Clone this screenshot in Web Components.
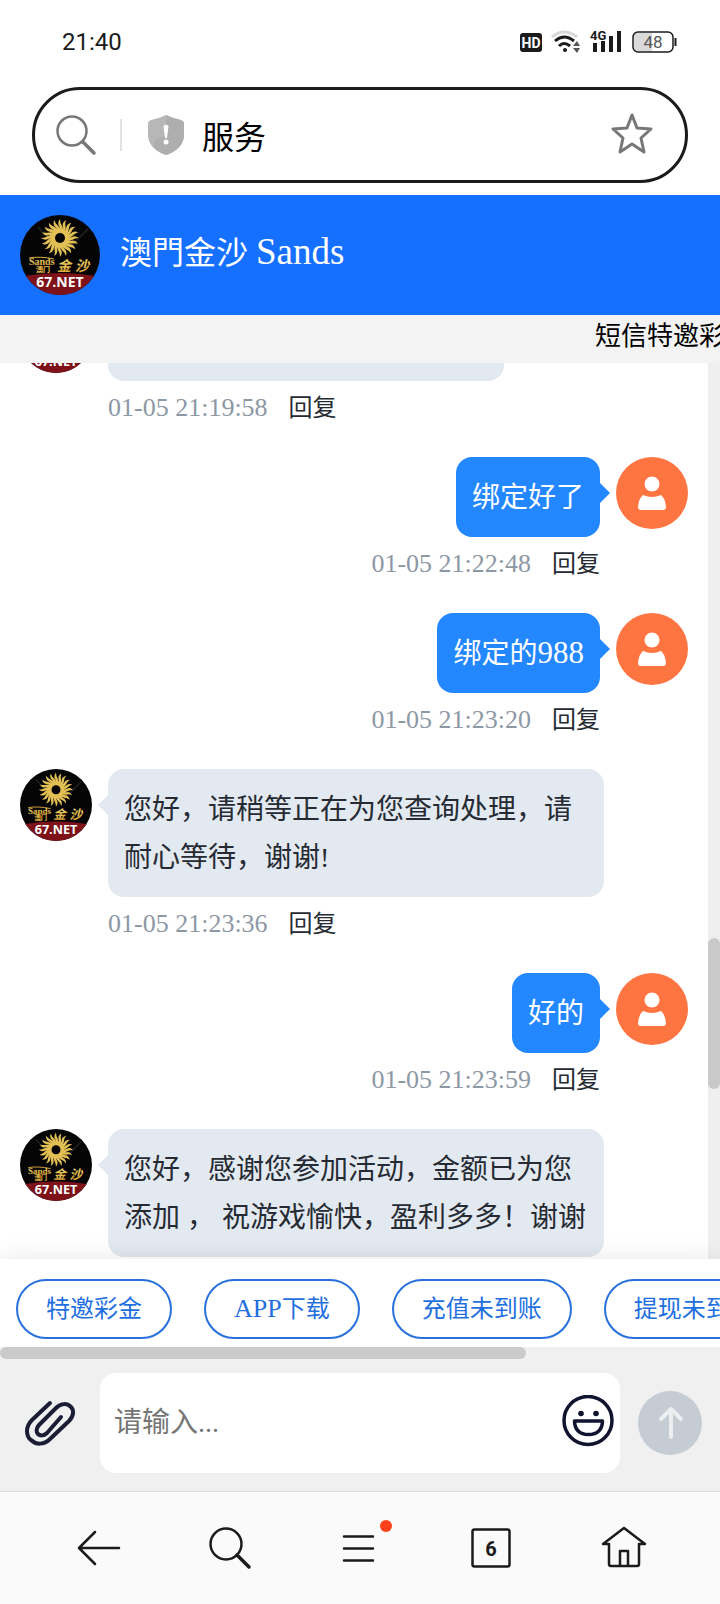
<!DOCTYPE html>
<html lang="zh-CN">
<head>
<meta charset="utf-8">
<meta name="viewport" content="width=device-width, initial-scale=1">
<title>服务</title>
<style>
    body {
        margin: 0;
        height: 100vh;
        display: flex;
        flex-direction: column;
        overflow: hidden;
        background: #fff;
        color: #262b33;
        font-family: "Liberation Serif", "Noto Sans CJK SC", sans-serif;
    }
</style>
</head>
<body>
    <status-bar time="21:40" battery="48"></status-bar>
    <address-bar value="服务"></address-bar>
    <chat-header>澳門金沙 <span>Sands</span></chat-header>
    <notice-bar>短信特邀彩</notice-bar>
    <chat-list>
        <chat-message class="history" time="01-05 21:19:58"></chat-message>
        <chat-message own time="01-05 21:22:48">绑定好了</chat-message>
        <chat-message own time="01-05 21:23:20">绑定的<span>988</span></chat-message>
        <chat-message time="01-05 21:23:36">您好，请稍等正在为您查询处理，请耐心等待，谢谢!</chat-message>
        <chat-message own time="01-05 21:23:59">好的</chat-message>
        <chat-message>您好，感谢您参加活动，金额已为您添加 ， 祝游戏愉快，盈利多多！谢谢</chat-message>
    </chat-list>
    <quick-replies>
        <button>特邀彩金</button>
        <button><quick-word>APP</quick-word>下载</button>
        <button>充值未到账</button>
        <button>提现未到账</button>
    </quick-replies>
    <message-composer placeholder="请输入..."></message-composer>
    <browser-nav tabs="6"></browser-nav>

<script>
class StatusBar extends HTMLElement {

    connectedCallback() {
        this.attachShadow({mode: "open"}).innerHTML = `
            <style>
                :host {
                    display: flex;
                    flex: none;
                    align-items: center;
                    justify-content: space-between;
                    height: 83px;
                    padding: 0 43px 0 62px;
                    font-family: Roboto, sans-serif;
                    font-size: 24px;
                    color: #1b1b1d;
                }
                .icons {
                    display: flex;
                    align-items: center;
                    gap: 9px;
                }
                svg {
                    display: block;
                }
            </style>
            <span>${this.getAttribute("time")}</span>
            <div class="icons">
                <svg width="22" height="22" viewBox="0 0 22 22">
                    <rect x="0" y="2" width="22" height="19" rx="3" fill="#1b1b1d"/>
                    <text x="11" y="17" text-anchor="middle" font-size="14" font-weight="700" fill="#fff">HD</text>
                </svg>
                <svg width="30" height="24" viewBox="0 0 30 24" fill="none" stroke-width="3">
                    <path d="M1 7Q13-3 26 7" stroke="#d8d8d8"/>
                    <path d="M4 11Q13 3 23 11M8 16Q13 11 19 16" stroke="#1b1b1d"/>
                    <circle cx="14" cy="20" r="2" fill="#1b1b1d"/>
                    <path d="M22 16l4-5 3 5zM22 18h7l-3 5z" fill="#555"/>
                </svg>
                <svg width="32" height="26" viewBox="0 0 32 26" fill="#1b1b1d">
                    <path d="M3 14h4v9H3zM11 12h4v11h-4zM19 7h4v16h-4zM27 2h4v21h-4z"/>
                    <text x="0" y="11" font-size="13" font-weight="700">4G</text>
                </svg>
                <svg width="46" height="22" viewBox="0 0 46 22">
                    <path d="M6 2H21V20H6Q3 20 3 16V6Q3 2 6 2" fill="#dadada"/>
                    <rect x="2" y="1" width="40" height="20" rx="5" fill="none" stroke="#1b1b1d" stroke-width="1.5"/>
                    <path d="M44.500 7v8" stroke="#1b1b1d" stroke-width="2"/>
                    <text x="22" y="17" text-anchor="middle" font-size="17" fill="#555">${this.getAttribute("battery")}</text>
                </svg>
            </div>`;
    }
}

class AddressBar extends HTMLElement {

    connectedCallback() {
        this.attachShadow({mode: "open"}).innerHTML = `
            <style>
                :host {
                    display: block;
                    flex: none;
                    padding: 4px 32px 12px;
                }
                form {
                    display: flex;
                    align-items: center;
                    box-sizing: border-box;
                    height: 96px;
                    padding: 0 32px 0 20px;
                    border: 3px solid #1b1b1d;
                    border-radius: 48px;
                }
                svg {
                    display: block;
                    flex: none;
                }
                i {
                    width: 2px;
                    height: 32px;
                    margin: 0 26px 0 23px;
                    background: #e2e2e2;
                }
                input {
                    flex: 1;
                    min-width: 0;
                    padding: 0;
                    margin-left: 18px;
                    border: 0;
                    outline: 0;
                    background: none;
                    font: 32px/48px "Noto Sans CJK SC", sans-serif;
                    color: #000;
                }
                button {
                    padding: 0;
                    border: 0;
                    background: none;
                }
            </style>
            <form>
                <svg width="42" height="42" viewBox="0 0 42 42" fill="none" stroke="#777" stroke-linecap="round">
                    <circle cx="17" cy="17" r="14.500" stroke-width="2.500"/>
                    <path d="M28 28L39 39" stroke-width="3.500"/>
                </svg>
                <i></i>
                <svg width="36" height="42" viewBox="0 0 36 42">
                    <path d="M18 1Q26 5 33 6Q36 7 36 10V22Q35 35 18 41Q1 35 0 22V10Q0 7 3 6Q10 5 18 1Z" fill="#b7b7b7"/>
                    <path d="M18 1Q26 5 33 6Q36 7 36 10V22Q35 35 18 41Q9 38 5 32Q6 23 15 23L18 18Z" fill="#aeaeae"/>
                    <path d="M15.500 12Q18 9 20.500 12L19 24H17Z" fill="#fff"/>
                    <circle cx="18" cy="28" r="2.500" fill="#fff"/>
                </svg>
                <input type="text" aria-label="地址" value="${this.getAttribute("value")}">
                <button type="button" aria-label="收藏">
                    <svg width="42" height="44" viewBox="0 0 42 44" fill="none" stroke="#777" stroke-width="3" stroke-linejoin="round">
                        <path d="M21 2L26 15L40 16L30 25L33 39L21 31L9 39L12 25L2 16L16 15Z"/>
                    </svg>
                </button>
            </form>`;
    }
}

// Round casino logo, shared by the header and the support messages
class BrandLogo extends HTMLElement {

    connectedCallback() {
        let rays = "";
        for (let i = 0; i < 20; i++) {
            rays += `<path transform="rotate(${i * 18})" d="M-2-4Q1-9-1-12Q-3-15 0-19Q0-15 2-12Q4-8 2-4Z"/>`;
        }
        this.attachShadow({mode: "open"}).innerHTML = `
            <style>
                :host {
                    display: block;
                    flex: none;
                    width: 72px;
                    height: 72px;
                    border-radius: 50%;
                    overflow: hidden;
                }
                svg {
                    display: block;
                    width: 100%;
                    height: 100%;
                }
            </style>
            <svg viewBox="0 0 80 80" role="img" aria-label="Sands">
                <defs>
                    <linearGradient id="gold" x1="0" y1="0" x2="0" y2="1">
                        <stop offset="0" stop-color="#f5df7a"/>
                        <stop offset="1" stop-color="#d6a02e"/>
                    </linearGradient>
                </defs>
                <rect width="80" height="80" fill="#050505"/>
                <path d="M18 12L34 30M68 14L48 34M10 44L24 58" stroke="#1d1d1d" stroke-width="2"/>
                <g transform="translate(40 23)" fill="#e3c055">${rays}<circle r="5" fill="#050505"/></g>
                <text x="9" y="50" font-family="Liberation Serif, serif" font-size="10" font-weight="700" fill="url(#gold)">Sands</text>
                <path d="M9 43Q20 41 34 44" fill="none" stroke="#e0b040"/>
                <text x="16" y="57" font-family="Noto Sans CJK SC, sans-serif" font-size="7" font-weight="900" fill="#e0b040">澳门</text>
                <text x="37" y="56" font-family="Noto Sans CJK SC, sans-serif" font-size="14" font-weight="700" font-style="italic" fill="url(#gold)">金</text>
                <text x="55" y="56" font-family="Noto Sans CJK SC, sans-serif" font-size="14" font-weight="700" font-style="italic" fill="url(#gold)">沙</text>
                <path d="M0 62Q40 54 80 62V80H0Z" fill="#7e1218"/>
                <text x="40" y="72" text-anchor="middle" font-family="Open Sans, sans-serif" font-size="14" font-weight="700" fill="#fff">67.NET</text>
            </svg>`;
    }
}

class ChatHeader extends HTMLElement {

    connectedCallback() {
        this.attachShadow({mode: "open"}).innerHTML = `
            <style>
                :host {
                    display: flex;
                    flex: none;
                    align-items: center;
                    gap: 20px;
                    padding: 20px;
                    background: #1670ff;
                    color: #fff;
                }
                brand-logo {
                    width: 80px;
                    height: 80px;
                }
                h1 {
                    margin: 0;
                    padding-bottom: 4px;
                    font-size: 32px;
                    font-weight: 400;
                    line-height: 48px;
                }
                ::slotted(span) {
                    font-size: 37px;
                    line-height: 1;
                }
            </style>
            <brand-logo></brand-logo>
            <h1><slot></slot></h1>`;
        // ::slotted only reaches direct children of the host, which the span is
    }
}

class NoticeBar extends HTMLElement {

    connectedCallback() {
        this.attachShadow({mode: "open"}).innerHTML = `
            <style>
                :host {
                    display: flex;
                    flex: none;
                    overflow: hidden;
                    white-space: nowrap;
                    background: #f3f3f3;
                    color: #000;
                    font-size: 26px;
                    line-height: 44px;
                    height: 48px;
                }
                /* the ticker has only just come in from the right edge */
                p {
                    flex: none;
                    margin: 0 0 0 calc(100% - 125px);
                }
            </style>
            <p><slot></slot></p>`;
    }
}

class ChatList extends HTMLElement {

    connectedCallback() {
        this.attachShadow({mode: "open"}).innerHTML = `
            <style>
                :host {
                    display: flex;
                    flex: 1;
                    min-height: 0;
                    overflow: hidden;
                }
                /* the list sticks to its newest message */
                .messages {
                    display: flex;
                    flex: 1;
                    flex-direction: column;
                    justify-content: flex-end;
                    min-width: 0;
                    padding: 0 20px 2px;
                }
                .track {
                    display: grid;
                    grid-template-rows: 575fr 151fr 170fr;
                    width: 12px;
                    background: #efefef;
                }
                .thumb {
                    grid-row: 2;
                    border-radius: 6px;
                    background: #c9c9c9;
                }
            </style>
            <div class="messages"><slot></slot></div>
            <div class="track"><div class="thumb"></div></div>`;
    }
}

class ChatMessage extends HTMLElement {

    connectedCallback() {
        const time = this.getAttribute("time");
        const avatar = this.hasAttribute("own") ? `
            <svg class="user" viewBox="0 0 72 72" role="img" aria-label="我">
                <circle cx="36" cy="36" r="36" fill="#ff7542"/>
                <circle cx="36" cy="27" r="7.500" fill="#fff"/>
                <path d="M27 38Q36 42 45 38Q49 41 50 50Q50 53 47 53H25Q22 53 22 50Q23 41 27 38Z" fill="#fff"/>
            </svg>` : `<brand-logo></brand-logo>`;
        const meta = time ? `
            <div class="meta">
                <time>${time}</time>
                <button>回复</button>
            </div>` : "";
        this.attachShadow({mode: "open"}).innerHTML = `
            <style>
                :host {
                    display: flex;
                    flex: none;
                    gap: 16px;
                    padding-right: 84px;
                }
                :host([own]) {
                    flex-direction: row-reverse;
                    padding-right: 0;
                    padding-left: 84px;
                }
                .user {
                    display: block;
                    flex: none;
                    width: 72px;
                    height: 72px;
                }
                .body {
                    display: flex;
                    flex-direction: column;
                    align-items: flex-start;
                    min-width: 0;
                }
                :host([own]) .body {
                    align-items: flex-end;
                }
                .bubble {
                    position: relative;
                    box-sizing: border-box;
                    min-height: 80px;
                    padding: 17px 16px 15px;
                    border-radius: 16px;
                    background: #e3e9f1;
                    font-size: 28px;
                    line-height: 48px;
                }
                :host([own]) .bubble {
                    background: #2388ff;
                    color: #fff;
                }
                :host(.history) .bubble {
                    width: 396px;
                }
                .bubble::before {
                    content: "";
                    position: absolute;
                    top: 26px;
                    right: 100%;
                    border: 10px solid transparent;
                    border-left-width: 0;
                    border-right-color: #e3e9f1;
                }
                :host([own]) .bubble::before {
                    right: auto;
                    left: 100%;
                    border-width: 10px 0 10px 10px;
                    border-color: transparent transparent transparent #2388ff;
                }
                ::slotted(span) {
                    font-size: 31px;
                    line-height: 1;
                }
                .meta {
                    display: flex;
                    align-items: baseline;
                    gap: 21px;
                    margin: 10px 0 32px;
                    line-height: 34px;
                }
                time {
                    font-size: 26px;
                    color: #8d98a5;
                }
                button {
                    padding: 0;
                    border: 0;
                    background: none;
                    font: inherit;
                    font-size: 24px;
                    color: inherit;
                }
            </style>
            ${avatar}
            <div class="body">
                <div class="bubble"><slot></slot></div>
                ${meta}
            </div>`;
    }
}

// Latin word inside a reply chip, set a little larger than the Chinese text
class QuickWord extends HTMLElement {

    connectedCallback() {
        this.attachShadow({mode: "open"}).innerHTML = `
            <style>
                :host {
                    font-size: 26px;
                    line-height: 1;
                }
            </style>
            <slot></slot>`;
    }
}

class QuickReplies extends HTMLElement {

    connectedCallback() {
        this.attachShadow({mode: "open"}).innerHTML = `
            <style>
                :host {
                    display: block;
                    flex: none;
                    position: relative;
                    background: #fff;
                    box-shadow: 0 0 24px rgba(0, 0, 0, 0.1);
                }
                .row {
                    display: flex;
                    gap: 32px;
                    overflow: hidden;
                    padding: 20px 16px 8px;
                }
                ::slotted(button) {
                    flex: none;
                    height: 60px;
                    padding: 0 28px;
                    border: 2px solid #2870dc;
                    border-radius: 30px;
                    background: #fff;
                    color: #1f6fdf;
                    font: inherit;
                    font-size: 24px;
                    line-height: 56px;
                }
                .track {
                    height: 12px;
                    background: #f0f0f0;
                }
                .thumb {
                    width: 73%;
                    height: 100%;
                    border-radius: 6px;
                    background: #cbcbcb;
                }
            </style>
            <div class="row"><slot></slot></div>
            <div class="track"><div class="thumb"></div></div>`;
    }
}

class MessageComposer extends HTMLElement {

    connectedCallback() {
        this.attachShadow({mode: "open"}).innerHTML = `
            <style>
                :host {
                    display: block;
                    flex: none;
                    position: relative;
                    background: #f0f0f0;
                }
                form {
                    display: flex;
                    align-items: center;
                    gap: 18px;
                    padding: 14px 18px 18px 24px;
                }
                button {
                    flex: none;
                    padding: 0;
                    border: 0;
                    background: none;
                }
                svg {
                    display: block;
                }
                .clip {
                    margin-right: 6px;
                }
                .field {
                    display: flex;
                    flex: 1;
                    align-items: center;
                    min-width: 0;
                    height: 100px;
                    padding: 0 6px 0 14px;
                    box-sizing: border-box;
                    border-radius: 16px;
                    background: #fff;
                }
                input {
                    flex: 1;
                    min-width: 0;
                    padding: 0;
                    border: 0;
                    outline: 0;
                    background: none;
                    font: inherit;
                    font-size: 28px;
                    line-height: 48px;
                    color: inherit;
                }
                input::placeholder {
                    color: #757575;
                }
            </style>
            <form>
                <button class="clip" type="button" aria-label="附件">
                    <svg width="52" height="48" viewBox="0 0 52 48" fill="none" stroke="#1b1d35" stroke-width="4" stroke-linecap="round" stroke-linejoin="round">
                        <path d="M26 4L8 21C1 28 2 37 7 41C12 46 20 46 26 40L45 22C50 17 50 11 47 8C43 4 37 4 32 9L15 26C12 29 12 33 14 35C16 37 20 37 23 34L37 18"/>
                    </svg>
                </button>
                <div class="field">
                    <input type="text" aria-label="消息" placeholder="${this.getAttribute("placeholder")}">
                    <button type="button" aria-label="表情">
                        <svg width="52" height="56" viewBox="0 0 52 56" fill="none" stroke="#11142e" stroke-width="3.500">
                            <circle cx="26" cy="25.500" r="24"/>
                            <circle cx="19" cy="18.500" r="2.800" fill="#11142e" stroke="none"/>
                            <circle cx="34" cy="18.500" r="2.800" fill="#11142e" stroke="none"/>
                            <path d="M12.500 26H40.500Q40 39.500 26.500 39.500Q13 39.500 12.500 26Z" stroke-linejoin="round"/>
                        </svg>
                    </button>
                </div>
                <button type="submit" aria-label="发送">
                    <svg width="64" height="64" viewBox="0 0 64 64" fill="none" stroke="#eceef0" stroke-width="4" stroke-linecap="round" stroke-linejoin="round">
                        <circle cx="32" cy="32" r="32" fill="#c5ccd4" stroke="none"/>
                        <path d="M33 46V18M23 28L33 18L43 28"/>
                    </svg>
                </button>
            </form>`;
    }
}

class BrowserNav extends HTMLElement {

    connectedCallback() {
        this.attachShadow({mode: "open"}).innerHTML = `
            <style>
                :host {
                    display: block;
                    flex: none;
                    position: relative;
                    border-top: 1px solid #dcdcdc;
                    background: #fafafa;
                }
                nav {
                    display: flex;
                    padding: 0 32px;
                }
                button {
                    display: flex;
                    flex: 1;
                    align-items: center;
                    justify-content: center;
                    height: 112px;
                    padding: 0;
                    border: 0;
                    background: none;
                }
                svg {
                    display: block;
                    fill: none;
                    stroke: #1b1b1b;
                    stroke-width: 2.500;
                    stroke-linecap: round;
                    stroke-linejoin: round;
                    overflow: visible;
                }
                text {
                    font-family: Roboto, sans-serif;
                    font-size: 20px;
                    font-weight: 700;
                    fill: #1b1b1b;
                    stroke: none;
                }
            </style>
            <nav>
                <button aria-label="返回">
                    <svg width="44" height="44" viewBox="0 0 44 44">
                        <path d="M43 22H3M19 6L3 22L19 38"/>
                    </svg>
                </button>
                <button aria-label="搜索">
                    <svg width="44" height="44" viewBox="0 0 44 44">
                        <circle cx="19" cy="18" r="15.500"/>
                        <path d="M30 29L42 41" stroke-width="3.500"/>
                    </svg>
                </button>
                <button aria-label="菜单">
                    <svg width="44" height="44" viewBox="0 0 44 44">
                        <path d="M6 10.500H35M6 22.500H35M6 34.500H35"/>
                        <circle cx="48" cy="0" r="6" fill="#ff421c" stroke="none"/>
                    </svg>
                </button>
                <button aria-label="标签页">
                    <svg width="44" height="44" viewBox="0 0 44 44">
                        <rect x="3.500" y="3.500" width="37" height="37" rx="2"/>
                        <text x="22" y="30" text-anchor="middle">${this.getAttribute("tabs")}</text>
                    </svg>
                </button>
                <button aria-label="主页">
                    <svg width="44" height="44" viewBox="0 0 44 44">
                        <path d="M9 18H3L24 2L45 18H39V38Q39 40 37 40H11Q9 40 9 38ZM20 40V25H28V40"/>
                    </svg>
                </button>
            </nav>`;
    }
}

customElements.define("status-bar", StatusBar);
customElements.define("address-bar", AddressBar);
customElements.define("brand-logo", BrandLogo);
customElements.define("chat-header", ChatHeader);
customElements.define("notice-bar", NoticeBar);
customElements.define("chat-list", ChatList);
customElements.define("chat-message", ChatMessage);
customElements.define("quick-word", QuickWord);
customElements.define("quick-replies", QuickReplies);
customElements.define("message-composer", MessageComposer);
customElements.define("browser-nav", BrowserNav);
</script>
</body>
</html>
